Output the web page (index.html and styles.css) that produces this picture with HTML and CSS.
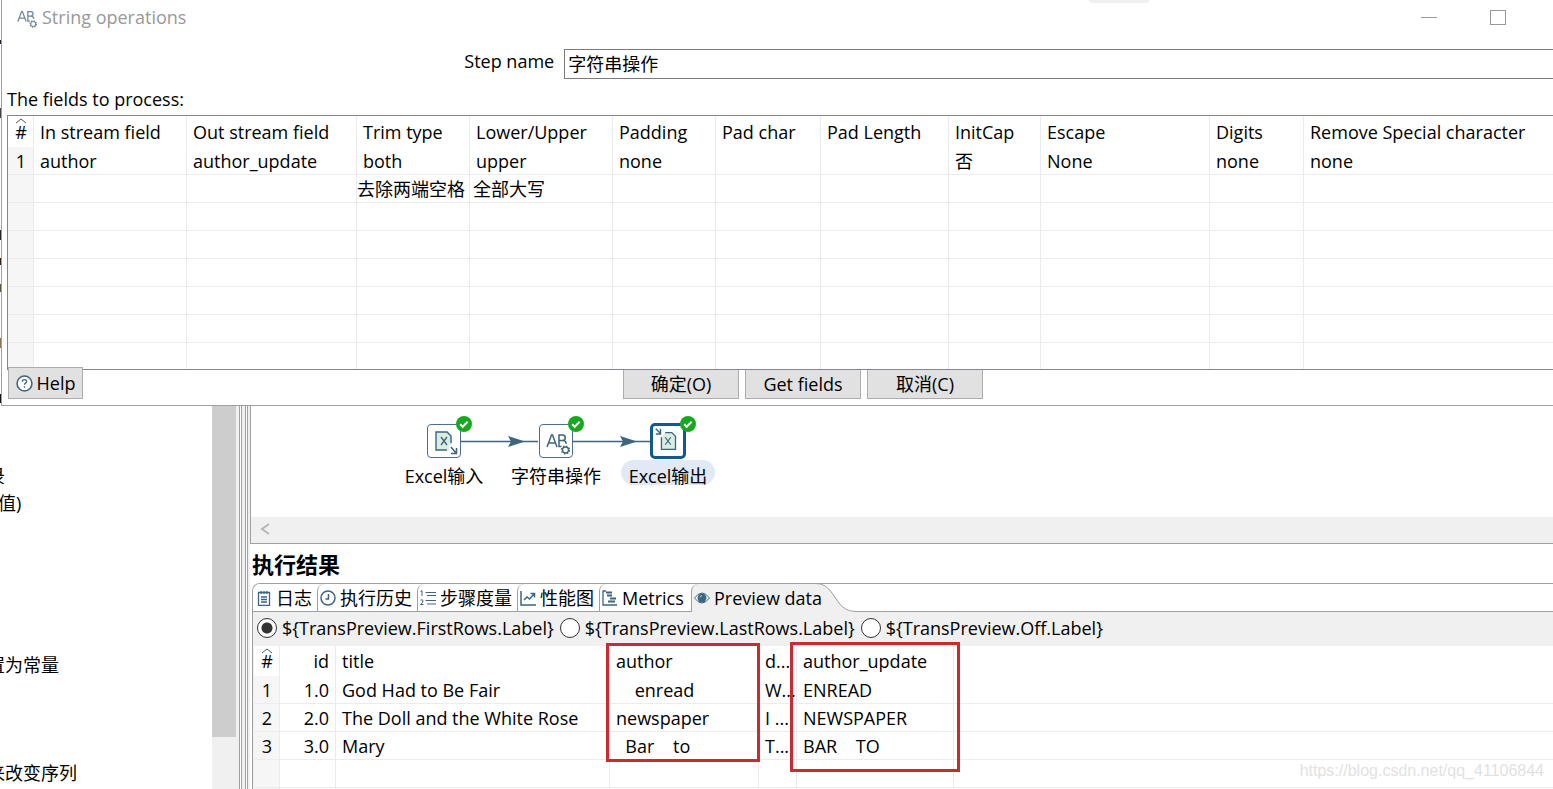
FILE: index.html
```html
<!DOCTYPE html>
<html lang="zh-CN">
<head>
<meta charset="utf-8">
<title>String operations</title>
<link rel="stylesheet" href="styles.css">
</head>
<body>
<svg class="defs" width="0" height="0" aria-hidden="true">
  <symbol id="ab" viewBox="0 0 24 24">
    <path d="M1 15 5.500 3h1L11 15M3 11h6M15.500 14.500H13V3h3.500q2.800 0 2.800 2.800T16.500 8.600H13M16.500 8.600q3.500 0 3.700 3.200" fill="none" stroke="currentColor" stroke-width="1.500"/>
    <circle cx="19.500" cy="18" r="3" fill="none" stroke="currentColor" stroke-width="1.300"/>
    <circle cx="19.500" cy="18" r="4" fill="none" stroke="currentColor" stroke-width="1.300" stroke-dasharray="1.500 1.641"/>
  </symbol>
  <symbol id="ok" viewBox="0 0 16 16">
    <circle cx="8" cy="8" r="8" fill="#16a81f"/>
    <path d="m4.200 8.300 2.600 2.500 4.800-5" fill="none" stroke="#fff" stroke-width="2"/>
  </symbol>
</svg>

<div class="top">
  <div class="behind"></div>
  <section class="dialog">
    <header class="titlebar">
      <svg class="title-icon" viewBox="0 0 24 24"><use href="#ab"/></svg>
      <span class="title">String operations</span>
      <span class="handle"></span>
      <button class="win min" aria-label="Minimize"></button>
      <button class="win max" aria-label="Maximize"></button>
    </header>
    <div class="step">
      <label for="step">Step name</label>
      <input id="step" type="text" value="字符串操作">
    </div>
    <p class="caption">The fields to process:</p>
    <div class="fields">
      <table class="grid">
        <colgroup><col class="w26"><col class="w153"><col class="w170"><col class="w113"><col class="w143"><col class="w103"><col class="w105"><col class="w128"><col class="w92"><col class="w169"><col class="w94"><col></colgroup>
        <thead><tr><th class="num"><svg class="sort" viewBox="0 0 12 6"><path d="m1 5 5-4 5 4"/></svg>#</th><th>In stream field</th><th>Out stream field</th><th>Trim type</th><th>Lower/Upper</th><th>Padding</th><th>Pad char</th><th>Pad Length</th><th>InitCap</th><th>Escape</th><th>Digits</th><th>Remove Special character</th></tr></thead>
        <tbody>
          <tr><td class="num">1</td><td>author</td><td>author_update</td><td>both</td><td>upper</td><td>none</td><td></td><td></td><td>否</td><td>None</td><td>none</td><td>none</td></tr>
          <tr><td class="num"></td><td></td><td></td><td class="note">去除两端空格</td><td class="note-in">全部大写</td><td></td><td></td><td></td><td></td><td></td><td></td><td></td></tr>
          <tr><td class="num"></td><td></td><td></td><td></td><td></td><td></td><td></td><td></td><td></td><td></td><td></td><td></td></tr>
          <tr><td class="num"></td><td></td><td></td><td></td><td></td><td></td><td></td><td></td><td></td><td></td><td></td><td></td></tr>
          <tr><td class="num"></td><td></td><td></td><td></td><td></td><td></td><td></td><td></td><td></td><td></td><td></td><td></td></tr>
          <tr><td class="num"></td><td></td><td></td><td></td><td></td><td></td><td></td><td></td><td></td><td></td><td></td><td></td></tr>
          <tr><td class="num"></td><td></td><td></td><td></td><td></td><td></td><td></td><td></td><td></td><td></td><td></td><td></td></tr>
          <tr class="last"><td class="num"></td><td></td><td></td><td></td><td></td><td></td><td></td><td></td><td></td><td></td><td></td><td></td></tr>
        </tbody>
      </table>
    </div>
    <footer class="actions">
      <button class="btn help"><svg viewBox="0 0 16 16"><circle cx="8" cy="8" r="7" fill="#fff" stroke="#3d6480" stroke-width="1.500"/><path d="M6 6.300q0-2 2-2t2 1.800q0 1-1 1.600t-1 1.500M8 10.500v1.500" fill="none" stroke="#3d6480" stroke-width="1.300"/></svg>Help</button>
      <button class="btn">确定(O)</button>
      <button class="btn">Get fields</button>
      <button class="btn">取消(C)</button>
      <span></span>
    </footer>
  </section>
</div>

<main class="workspace">
  <aside class="tree">
    <ul>
      <li></li><li></li><li>录</li><li class="paren">值)</li><li></li><li></li><li></li><li></li><li></li><li>置为常量</li><li></li><li></li><li></li><li>来改变序列</li>
    </ul>
    <div class="vscroll"><div class="thumb"></div></div>
  </aside>
  <div class="sash"></div>
  <div class="main">
    <div class="canvas">
      <svg class="hops" viewBox="0 0 302 112"><g fill="#3d6480" stroke="#3d6480"><path d="M210 35.500h78M322 35.500h78" stroke-width="1.300"/><path d="m258 30 17 5.500-17 5.500 3-5.500zM370 30l17 5.500-17 5.500 3-5.500z" stroke="none"/></g></svg>
      <div class="node n1">
        <div class="box"><svg viewBox="0 0 32 32"><path d="M8 7h12l4 4v9h-3v5H8z" fill="#d9eedf"/><path d="M19 25H8V7h11l4 4v7" fill="none" stroke="#3d6480" stroke-width="1.400"/><path d="m13 12 6 8m0-8-6 8" stroke="#3d6480" stroke-width="1.300"/><path d="m23 22 5 6m.500-5v5.500H23" fill="none" stroke="#3d6480" stroke-width="1.500"/></svg></div>
        <svg class="badge"><use href="#ok"/></svg>
        <span>Excel输入</span>
      </div>
      <div class="node n2">
        <div class="box"><svg class="abi" viewBox="0 0 24 24"><use href="#ab"/></svg></div>
        <svg class="badge"><use href="#ok"/></svg>
        <span>字符串操作</span>
      </div>
      <div class="node n3">
        <div class="box"><svg viewBox="0 0 32 32"><path d="M9 12v13h15V11l-4-4h-7" fill="#d9eedf" stroke="#3d6480" stroke-width="1.400"/><path d="m13 12 6 8m0-8-6 8" stroke="#3d6480" stroke-width="1.300"/><path d="m3 3 5 5m0-5v5.500H3" fill="none" stroke="#3d6480" stroke-width="1.500"/></svg></div>
        <svg class="badge"><use href="#ok"/></svg>
        <span>Excel输出</span>
      </div>
    </div>
    <div class="hscroll"><svg viewBox="0 0 10 12"><path d="M9 1 2 6l7 5" fill="none" stroke="#b5b5b5" stroke-width="2"/></svg></div>
    <section class="results">
      <h2>执行结果</h2>
      <div class="panel">
        <nav class="tabs">
          <button class="tab t64"><svg viewBox="0 0 16 16"><path d="M2.500 2.500h11v13h-11zM5 1v3M8 1v3M11 1v3M5 7h6M5 9.500h6M5 12h6" stroke-width="1.300"/></svg>日志</button>
          <button class="tab t100"><svg viewBox="0 0 16 16"><circle cx="8" cy="8" r="7"/><path d="M8.500 4v5H5.500"/></svg>执行历史</button>
          <button class="tab t100"><svg viewBox="0 0 16 16"><path d="M5.500 2.500H16M7 5.500h9M5.500 10.500H16M7 14h9M.500 1.500 2 .500V6M.500 10q2.500-1 2.500 1T.500 14.500H3.500" stroke-width="1"/></svg>步骤度量</button>
          <button class="tab t82"><svg viewBox="0 0 16 16"><path d="M1 1v14h15M4 10l3-3 2.500 2L14 4M10.500 3.500h4v4"/></svg>性能图</button>
          <button class="tab t92"><svg viewBox="0 0 16 16"><path d="M4 1H1v14h14" stroke-width="1.300"/><path d="M4 2.500h6M5 5.500h5M8 8.500h6M6 11.500h7" stroke-width="2"/></svg>Metrics</button>
          <button class="tab active"><svg class="curve" viewBox="0 0 44 29"><path d="M0 1h4Q14 1 20 10l8 11q6 8 16 8H0z" fill="#f0f0f0" stroke="none"/><path d="M0 .500h4Q14 .500 20 10l7 10q6 8.500 17 8.500" stroke="#a0a0a0" stroke-width="1"/></svg><svg viewBox="0 0 16 16"><path d="M.500 8Q8-2 15.500 8 8 18 .500 8z" fill="#fff" stroke-width="1"/><circle cx="8" cy="8" r="4.500" fill="#3d6480" stroke="none"/><path d="M6 7.500q.3-1.700 2-1.900" stroke="#fff" stroke-width=".7"/></svg><b>Preview data</b></button>
          <span class="rest"></span>
        </nav>
        <div class="radios">
          <label><input type="radio" name="rows" checked>${TransPreview.FirstRows.Label}</label>
          <label><input type="radio" name="rows">${TransPreview.LastRows.Label}</label>
          <label><input type="radio" name="rows">${TransPreview.Off.Label}</label>
        </div>
        <div class="preview">
          <table class="grid">
            <colgroup><col class="w26"><col class="w56"><col class="w274"><col class="w149"><col class="w38"><col class="w157"><col></colgroup>
            <thead><tr><th class="num"><svg class="sort" viewBox="0 0 12 6"><path d="m1 5 5-4 5 4"/></svg>#</th><th class="right">id</th><th>title</th><th>author</th><th>d...</th><th>author_update</th><th></th></tr></thead>
            <tbody>
              <tr><td class="num">1</td><td class="right">1.0</td><td>God Had to Be Fair</td><td>    enread</td><td>W...</td><td>ENREAD</td><td></td></tr>
              <tr><td class="num">2</td><td class="right">2.0</td><td>The Doll and the White Rose</td><td>newspaper</td><td>I ...</td><td>NEWSPAPER</td><td></td></tr>
              <tr><td class="num">3</td><td class="right">3.0</td><td>Mary</td><td>  Bar    to</td><td>T...</td><td>BAR    TO</td><td></td></tr>
              <tr><td class="num"></td><td></td><td></td><td></td><td></td><td></td><td></td></tr>
              <tr><td class="num"></td><td></td><td></td><td></td><td></td><td></td><td></td></tr>
            </tbody>
          </table>
          <div class="mark m1"></div>
          <div class="mark m2"></div>
        </div>
      </div>
    </section>
  </div>
  <div class="watermark">https://blog.csdn.net/qq_41106844</div>
</main>
</body>
</html>
```
FILE: styles.css
```css
* { box-sizing: border-box; }
html, body { height: 100%; }
body {
  margin: 0;
  display: flex;
  flex-direction: column;
  overflow: hidden;
  background: #fff;
  color: #000;
  font: 18px/26px "Open Sans", "Noto Sans CJK SC", sans-serif;
}
button, input { font: inherit; color: inherit; margin: 0; }
.defs { position: absolute; }

.top { display: flex; flex: none; width: calc(100% + 52px); }
.behind {
  width: 1px;
  background: linear-gradient(#fff 40px, #223 40px 44px, #fff 44px 108px, #444 108px 118px, #fff 118px 230px, #222 230px 240px, #fff 240px 258px, #321 258px 265px, #fff 265px 284px, #554 284px 292px, #fff 292px 338px, #875 338px 348px, #fff 348px 394px, #111 394px 403px, #fff 403px);
}
.dialog {
  flex: 1;
  min-width: 0;
  border-left: 1px solid #a0a0a0;
  border-bottom: 1px solid #a0a0a0;
  padding: 0 6px 0 5px;
}
.titlebar {
  display: flex;
  align-items: center;
  height: 36px;
  padding: 0 93px 2px 0;
  color: #999;
}
.title-icon { width: 20px; height: 20px; margin: 4px 5px 0 10px; color: #6d8799; }
.title { flex: 1; }
.handle {
  align-self: flex-start;
  width: 60px;
  height: 3px;
  margin-right: 272px;
  border-radius: 0 0 4px 4px;
  background: #f0f0f0;
}
.win { padding: 0; background: none; border: 0 solid #999; }
.min { width: 16px; border-top-width: 1px; margin-right: 53px; }
.max { width: 16px; height: 15px; border-width: 1px; }

.step { display: flex; margin-top: 13px; }
.step label { width: 35%; padding-right: 10px; text-align: right; line-height: 24px; }
.step input {
  flex: 1;
  height: 30px;
  padding: 0 3px 2px;
  border: 1px solid #7a7a7a;
  border-radius: 0;
  background: #fff;
}
.caption { margin: 7px 0 3px; }
.fields { border: solid #828790; border-width: 1px 0 1px 1px; }

.grid { width: 100%; table-layout: fixed; border-collapse: separate; border-spacing: 0; }
.grid th, .grid td {
  height: 28px;
  padding: 0 0 0 6px;
  border-right: 1px solid #e9ebf0;
  border-bottom: 1px solid #ececec;
  font-weight: 400;
  line-height: 26px;
  text-align: left;
  white-space: pre;
  overflow: hidden;
}
.grid th { height: 31px; border-bottom: 0; }
.preview .grid th { height: 30px; }
.grid th:last-child, .grid td:last-child { border-right: 0; }
.grid .num { padding: 0 0 0 1px; text-align: center; }
.grid td.num { background: #f6f6f6; }
.grid th.num { position: relative; }
.grid .right { padding: 0 6px 0 0; text-align: right; }
.grid .last td { height: 26px; border-bottom: 0; }
.grid td.note { padding: 0; }
.grid td.note-in { padding-left: 3px; }
.sort { position: absolute; left: 7px; top: 2px; width: 12px; height: 6px; fill: none; stroke: #555; }
.w26 { width: 26px; } .w153 { width: 153px; } .w170 { width: 170px; } .w113 { width: 113px; }
.w143 { width: 143px; } .w103 { width: 103px; } .w105 { width: 105px; } .w128 { width: 128px; }
.w92 { width: 92px; } .w169 { width: 169px; } .w94 { width: 94px; } .w56 { width: 56px; }
.w274 { width: 274px; } .w149 { width: 149px; } .w38 { width: 38px; } .w157 { width: 157px; }

.actions {
  display: grid;
  grid-template-columns: 1fr 116px 116px 116px 1fr;
  gap: 6px;
  padding-bottom: 6px;
}
.btn { height: 29px; padding: 0; border: 1px solid #adadad; border-top: 0; border-radius: 0; background: #e1e1e1; line-height: 26px; }
.help {
  display: flex;
  align-items: center;
  justify-content: center;
  gap: 4px;
  width: 75px;
  height: 32px;
  margin: -3px 0 0 1px;
  border-top: 1px solid #adadad;
}
.help svg { width: 17px; height: 17px; }

.workspace { position: relative; display: flex; flex: 1; min-height: 0; }
.tree { display: flex; width: 236px; }
.tree ul { flex: 1; margin: 0; padding: 3px 0 0; list-style: none; overflow: hidden; white-space: nowrap; }
.tree li { height: 27px; margin-left: -13px; line-height: 27px; }
.tree .paren { margin-left: -2px; }
.vscroll { width: 24px; background: #f0f0f0; }
.thumb { height: calc(100% - 52px); background: #cdcdcd; }
.sash {
  width: 14px;
  background: linear-gradient(90deg, #f0f0f0 3px, #a0a0a0 3px 4px, #fff 4px 5px, #a0a0a0 5px 6px, #f0f0f0 6px 9px, #a0a0a0 9px 10px, #fff 10px 11px, #a0a0a0 11px 12px, #f0f0f0 12px);
}
.main { flex: 1; min-width: 0; display: flex; flex-direction: column; }
.canvas { position: relative; height: 111px; flex: none; border-left: 1px solid #a0a0a0; }
.hops { position: absolute; left: -1px; top: 0; width: 302px; height: 112px; overflow: visible; }
.node { position: absolute; top: 18px; width: 112px; text-align: center; }
.n1 { left: 137px; } .n2 { left: 249px; } .n3 { left: 361px; }
.box {
  width: 34px;
  height: 34px;
  margin: 0 auto 5px;
  border: 1px solid #4f6f87;
  border-radius: 4px;
  background: #fff;
}
.box svg { display: block; width: 32px; height: 32px; color: #3d6480; }
.box .abi { width: 24px; height: 24px; margin: 7px 0 0 6px; }
.badge { position: absolute; left: 68px; top: -8px; width: 16px; height: 16px; }
.n3 { top: 17px; }
.n3 .box { width: 36px; height: 36px; margin-bottom: 1px; border: 3px solid #14598c; border-radius: 5px; }
.n3 .box svg { width: 30px; height: 30px; }
.n3 .badge { top: -7px; }
.n3 span {
  display: inline-block;
  vertical-align: top;
  padding: 7px 8px 0;
  border-radius: 13px;
  background: #e1e9f4;
  line-height: 18px;
}
.hscroll { flex: none; height: 27px; border-left: 1px solid #a0a0a0; border-bottom: 1px solid #a0a0a0; padding: 6px 9px; background: #f0f0f0; }
.hscroll svg { display: block; width: 10px; height: 12px; }

.results { flex: 1; min-height: 0; padding-left: 2px; }
.results h2 { margin: 0; height: 39px; font-size: 22px; line-height: 40px; font-weight: 700; }
.panel { border-left: 1px solid #a0a0a0; border-top: 1px solid #a0a0a0; border-top-left-radius: 8px; }
.tabs { display: flex; height: 28px; }
.tab {
  display: flex;
  align-items: center;
  gap: 4px;
  padding: 0 0 0 2px;
  border: solid #a0a0a0;
  border-width: 0 0 1px 1px;
  border-top-left-radius: 7px;
  background: #fff;
  white-space: nowrap;
}
.tab:first-child { border-left: 0; padding-left: 3px; }
.tab svg { flex: none; width: 16px; height: 16px; fill: none; stroke: #3d6480; stroke-width: 1.500; }
.t64 { width: 64px; } .t100 { width: 100px; } .t82 { width: 82px; } .t92 { width: 92px; }
.tab.active { position: relative; width: 121px; background: #f0f0f0; border-bottom: 0; }
.tab.active .curve { position: absolute; left: 120px; top: -1px; width: 44px; height: 29px; }
.tab b { position: relative; font-weight: 400; }
.rest { flex: 1; margin-left: 42px; border-bottom: 1px solid #a0a0a0; }
.radios { display: flex; gap: 6px; height: 34px; padding: 3px 0 0 4px; background: #f0f0f0; white-space: nowrap; }
.radios label { display: flex; align-items: center; height: 26px; }
.radios input {
  appearance: none;
  width: 20px;
  height: 20px;
  margin-right: 5px;
  border: 1px solid #333;
  border-radius: 50%;
  background: #fff;
}
.radios input:checked { background: radial-gradient(circle, #333 5px, #fff 6px); }
.preview { position: relative; border-left: 1px solid #f0f0f0; }
.mark { position: absolute; border: 3px solid #cc2a33; }
.m1 { left: 352px; top: -3px; width: 154px; height: 119px; }
.m2 { left: 536px; top: -4px; width: 170px; height: 130px; }
.watermark {
  position: absolute;
  right: 9px;
  bottom: 5px;
  color: #e2e2e2;
  font: 16px/26px "Liberation Sans", sans-serif;
}
```
